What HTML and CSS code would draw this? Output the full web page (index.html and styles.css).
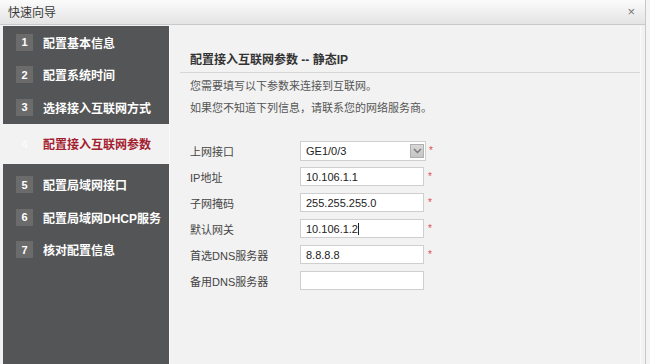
FILE: index.html
```html
<!DOCTYPE html>
<html lang="zh">
<head>
<meta charset="utf-8">
<link rel="stylesheet" href="styles.css">
</head>
<body>
<div class="dialog">
  <div class="titlebar">
    <span class="title">快速向导</span>
    <span class="close">×</span>
  </div>
  <div class="body">
    <ul class="steps">
      <li class="step"><span class="num">1</span><span class="label">配置基本信息</span></li>
      <li class="step"><span class="num">2</span><span class="label">配置系统时间</span></li>
      <li class="step"><span class="num">3</span><span class="label">选择接入互联网方式</span></li>
      <li class="step active"><span class="num">4</span><span class="label">配置接入互联网参数</span></li>
      <li class="step"><span class="num">5</span><span class="label">配置局域网接口</span></li>
      <li class="step"><span class="num">6</span><span class="label">配置局域网DHCP服务</span></li>
      <li class="step"><span class="num">7</span><span class="label">核对配置信息</span></li>
    </ul>
    <div class="content">
      <h2 class="heading">配置接入互联网参数 -- 静态IP</h2>
      <p class="note first">您需要填写以下参数来连接到互联网。</p>
      <p class="note">如果您不知道下列信息，请联系您的网络服务商。</p>
      <div class="form">
        <div class="row">
          <span class="flabel">上网接口</span>
          <div class="select"><span class="val">GE1/0/3</span><span class="arrow"><svg width="9" height="6" viewBox="0 0 9 6"><path d="M1 1 L4.5 4.5 L8 1" fill="none" stroke="#777" stroke-width="1.4"/></svg></span></div>
          <span class="req sel">*</span>
        </div>
        <div class="row">
          <span class="flabel">IP地址</span>
          <div class="input"><span class="val">10.106.1.1</span></div>
          <span class="req">*</span>
        </div>
        <div class="row">
          <span class="flabel">子网掩码</span>
          <div class="input"><span class="val">255.255.255.0</span></div>
          <span class="req">*</span>
        </div>
        <div class="row">
          <span class="flabel">默认网关</span>
          <div class="input"><span class="val">10.106.1.2</span><span class="caret"></span></div>
          <span class="req">*</span>
        </div>
        <div class="row">
          <span class="flabel">首选DNS服务器</span>
          <div class="input"><span class="val">8.8.8.8</span></div>
          <span class="req">*</span>
        </div>
        <div class="row">
          <span class="flabel">备用DNS服务器</span>
          <div class="input"></div>
        </div>
      </div>
    </div>
  </div>
</div>
</body>
</html>
```

FILE: styles.css
```css
* { box-sizing: border-box; }
html, body { margin: 0; padding: 0; }
body {
  width: 650px;
  height: 364px;
  overflow: hidden;
  background: #f4f4f4;
  font-family: "Liberation Sans", Arial, "Noto Sans CJK SC", sans-serif;
  font-size: 12px;
  color: #333;
}
.dialog {
  width: 646px;
  height: 364px;
  border-right: 1px solid #c8c8c8;
  background: #f2f2f2;
  display: flex;
  flex-direction: column;
}
.titlebar {
  height: 25px;
  flex: none;
  display: flex;
  align-items: center;
  justify-content: space-between;
  padding: 0 10px 1px 8px;
  background: linear-gradient(#fbfbfb, #e4e4e4);
  border-bottom: 1px solid #c9c9c9;
}
.title { font-size: 12px; color: #3a3a3a; font-family: "Noto Sans CJK SC", sans-serif; }
.close { font-size: 13px; color: #777; }
.body {
  flex: 1;
  display: flex;
  padding: 1px 4px 0 3px;
}
.steps {
  list-style: none;
  margin: 0;
  padding: 0;
  width: 167px;
  flex: none;
  background: #545556;
  border-right: 1px solid #fafafa;
  display: flex;
  flex-direction: column;
}
.step {
  height: 32.5px;
  flex: none;
  display: flex;
  align-items: center;
  padding-left: 13px;
  color: #fff;
  font-family: "Liberation Sans", Arial, "Noto Sans CJK SC", sans-serif;
  font-weight: bold;
  font-size: 12px;
}
.num {
  width: 17px;
  height: 17px;
  background: #6b6b6b;
  color: #fff;
  font-family: "Liberation Sans", Arial, sans-serif;
  font-weight: bold;
  font-size: 11px;
  display: flex;
  align-items: center;
  justify-content: center;
  margin-right: 10px;
}
.step.active {
  height: 40px;
  margin: 0 0 5px;
  background: #f2f2f2;
  color: #a3202f;
}
.step.active .num { background: transparent; color: #fafafa; }
.content {
  flex: 1;
  padding: 0 0 0 10px;
  border-right: 1px solid #fafafa;
}
.heading {
  margin: 24px 0 0;
  padding: 0 0 5px 10px;
  font-size: 12px;
  font-weight: bold;
  color: #333;
  border-bottom: 1px solid #d6d6d6;
  font-family: "Liberation Sans", Arial, "Noto Sans CJK SC", sans-serif;
}
.note {
  margin: 0;
  padding-left: 10px;
  font-size: 11px;
  color: #555;
  line-height: 16px;
  font-family: "Noto Sans CJK SC", sans-serif;
}
.note.first { margin-top: 4px; }
.note + .note { margin-top: 6px; }
.form {
  margin-top: 26px;
  display: flex;
  flex-direction: column;
  gap: 7px;
}
.row {
  display: flex;
  align-items: center;
  height: 19px;
}
.flabel {
  width: 120px;
  padding-left: 10px;
  font-size: 11px;
  color: #444;
  font-family: "Liberation Sans", Arial, "Noto Sans CJK SC", sans-serif;
}
.input, .select {
  width: 124px;
  height: 19px;
  background: #fff;
  border: 1px solid #cfcfcf;
  display: flex;
  align-items: center;
  padding-left: 5px;
  font-size: 11px;
  color: #222;
}
.select {
  width: 126px;
  height: 20px;
  justify-content: space-between;
  padding-right: 1px;
}
.arrow {
  width: 14px;
  height: 14px;
  background: linear-gradient(#d8d8d8, #c4c4c4);
  border: 1px solid #b0b0b0;
  display: flex;
  align-items: center;
  justify-content: center;
}
.caret {
  width: 1px;
  height: 12px;
  background: #222;
}
.req {
  color: #e05050;
  font-size: 10px;
  margin-left: 4px;
}
.req.sel { margin-left: 3px; }
```
